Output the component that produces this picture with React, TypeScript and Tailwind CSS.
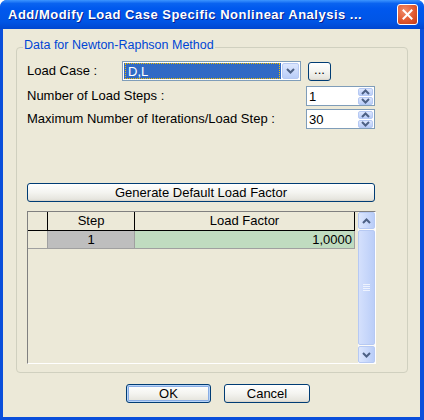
import React from "react";

const ChevDown = ({ className = "" }: { className?: string }) => (
  <svg width="9" height="6" viewBox="0 0 9 6" className={className}>
    <path d="M1 1 L4.5 4.5 L8 1" fill="none" stroke="#4D6185" strokeWidth="2" />
  </svg>
);
const ChevUp = ({ className = "" }: { className?: string }) => (
  <svg width="9" height="6" viewBox="0 0 9 6" className={className}>
    <path d="M1 5 L4.5 1.5 L8 5" fill="none" stroke="#4D6185" strokeWidth="2" />
  </svg>
);

function XpButton({ children, className = "", isDefault = false }: { children: React.ReactNode; className?: string; isDefault?: boolean }) {
  return (
    <div
      className={`flex items-center justify-center rounded-[3px] border border-[#003C74] bg-[linear-gradient(to_bottom,#FFFFFF_0%,#F4F4F0_50%,#E6E5DE_90%,#D6D0C5_100%)] ${
        isDefault ? "shadow-[inset_0_0_0_1px_#B8D4F8,inset_0_0_0_2px_#89ADE4]" : ""
      } ${className}`}
    >
      {children}
    </div>
  );
}

function Spin({ value }: { value: string }) {
  return (
    <div className="flex h-[20px] w-[69px] border border-[#7F9DB9] bg-white">
      <div className="flex flex-1 items-center pl-[2px] text-[13px] leading-none text-black">{value}</div>
      <div className="flex w-[16px] flex-col gap-[1px] py-[1px] pr-[1px]">
        <div className="flex flex-1 items-center justify-center rounded-[2px] border border-[#B6C9F3] bg-[linear-gradient(to_bottom,#DDE7FE,#B9CDF8)]">
          <ChevUp />
        </div>
        <div className="flex flex-1 items-center justify-center rounded-[2px] border border-[#B6C9F3] bg-[linear-gradient(to_bottom,#DDE7FE,#B9CDF8)]">
          <ChevDown />
        </div>
      </div>
    </div>
  );
}

export default function App() {
  return (
    <div
      className="flex h-[420px] w-[424px] flex-col overflow-hidden rounded-t-[7px] bg-[#0A4FDB]"
      style={{ fontFamily: '"Liberation Sans", Arial, sans-serif' }}
    >
      {/* Title bar */}
      <div className="flex h-[29px] shrink-0 items-center bg-[linear-gradient(to_bottom,#3D95FF_0%,#0A63F0_12%,#0058EE_30%,#0055E5_75%,#0047D0_100%)] pl-[8px] pr-[6px]">
        <span className="text-[13px] font-bold leading-none tracking-[0.5px] text-white [text-shadow:1px_1px_0_#0A1E8C]">
          Add/Modify Load Case Specific Nonlinear Analysis ...
        </span>
        <div className="ml-auto flex h-[21px] w-[21px] items-center justify-center rounded-[3px] border border-white bg-[radial-gradient(circle_at_35%_30%,#F08D6C_0%,#E0582F_55%,#C23A14_100%)]">
          <svg width="11" height="11" viewBox="0 0 11 11">
            <path d="M1.5 1.5 L9.5 9.5 M9.5 1.5 L1.5 9.5" stroke="white" strokeWidth="2" strokeLinecap="square" />
          </svg>
        </div>
      </div>

      {/* Client area */}
      <div className="mb-[3px] ml-[3px] mr-[4px] flex flex-1 flex-col bg-[#ECE9D8] pl-[13px] pt-[18px]">
        {/* Group box */}
        <div className="relative h-[326px] w-[392px] rounded-[4px] border border-[#D0D0BF] pl-[10px]">
          <span className="absolute left-[6px] top-[-10px] bg-[#ECE9D8] px-[1px] text-[12.5px] leading-[14px] text-[#0046D5]">
            Data for Newton-Raphson Method
          </span>

          {/* Load case row */}
          <div className="mt-[13px] flex h-[20px] w-[348px] items-center">
            <span className="w-[95px] text-[13px] text-black">Load Case :</span>
            <div className="flex h-[20px] w-[179px] items-stretch border border-[#7F9DB9] bg-white p-[1px]">
              <div className="flex flex-1 items-center bg-[#316AC5] px-[1px]">
                <div className="flex h-full flex-1 items-center border border-dotted border-[#F0C000] pl-[2px] text-[13px] leading-none text-white">
                  D,L
                </div>
              </div>
              <div className="ml-[1px] flex w-[17px] items-center justify-center rounded-[2px] border border-[#B6C9F3] bg-[linear-gradient(to_bottom,#DDE7FE,#B9CDF8)]">
                <ChevDown />
              </div>
            </div>
            <XpButton className="ml-[7px] h-[19px] w-[23px] text-[13px] leading-none text-black">
              <span className="-mt-[3px]">...</span>
            </XpButton>
          </div>

          {/* Number of load steps */}
          <div className="mt-[5px] flex h-[20px] w-[348px] items-center justify-between">
            <span className="text-[13px] text-black">Number of Load Steps :</span>
            <Spin value="1" />
          </div>

          {/* Max iterations */}
          <div className="mt-[3px] flex h-[20px] w-[348px] items-center justify-between">
            <span className="text-[13px] text-black">Maximum Number of Iterations/Load Step :</span>
            <Spin value="30" />
          </div>

          <XpButton className="mt-[54px] h-[19px] w-[348px] text-[13px] leading-none text-black">
            Generate Default Load Factor
          </XpButton>

          {/* Grid */}
          <div className="mt-[9px] flex h-[153px] w-[349px] border-b border-l border-r border-t border-b-white border-l-[#808080] border-r-white border-t-[#808080]">
            <div className="flex w-[327px] flex-col">
              <div className="flex h-[19px] text-[13px] text-black">
                <div className="w-[20px] border-b border-r border-b-black border-r-black bg-[#ECE9D8]" />
                <div className="flex w-[87px] items-center justify-center border-b border-r border-b-black border-r-black bg-[#ECE9D8]">
                  Step
                </div>
                <div className="flex w-[220px] items-center justify-center border-b border-r border-b-black border-r-black bg-[#ECE9D8]">
                  Load Factor
                </div>
              </div>
              <div className="flex h-[18px] text-[13px] text-black">
                <div className="w-[20px] border-b border-r border-b-[#A0A0A0] border-r-[#A0A0A0] bg-[#ECE9D8]" />
                <div className="flex w-[87px] items-center justify-center border-b border-r border-b-[#A0A0A0] border-r-[#A0A0A0] bg-[#BEBEBE]">
                  1
                </div>
                <div className="flex w-[220px] items-center justify-end border-b border-r border-b-[#A0A0A0] border-r-[#A0A0A0] bg-[#C0DCC0] pr-[2px]">
                  1,0000
                </div>
              </div>
            </div>
            {/* Scrollbar */}
            <div className="ml-[3px] flex w-[17px] flex-col bg-[#FBFAF7]">
              <div className="flex h-[17px] items-center justify-center rounded-[2px] border border-[#B6C9F3] bg-[linear-gradient(to_right,#DDE7FE,#B9CDF8)]">
                <ChevUp />
              </div>
              <div className="my-[1px] flex flex-1 items-center justify-center rounded-[2px] border border-[#B6C9F3] bg-[linear-gradient(to_right,#D4E0FC,#BBCEF8)]">
                <div className="flex flex-col gap-[1px]">
                  <div className="h-[1px] w-[7px] bg-[#EEF3FE]" />
                  <div className="h-[1px] w-[7px] bg-[#EEF3FE]" />
                  <div className="h-[1px] w-[7px] bg-[#EEF3FE]" />
                  <div className="h-[1px] w-[7px] bg-[#EEF3FE]" />
                </div>
              </div>
              <div className="flex h-[17px] items-center justify-center rounded-[2px] border border-[#B6C9F3] bg-[linear-gradient(to_right,#DDE7FE,#B9CDF8)]">
                <ChevDown />
              </div>
            </div>
          </div>
        </div>

        {/* OK / Cancel */}
        <div className="mt-[11px] flex gap-[13px] pl-[110px]">
          <XpButton isDefault className="h-[19px] w-[85px] text-[13px] leading-none text-black">
            OK
          </XpButton>
          <XpButton className="h-[19px] w-[86px] text-[13px] leading-none text-black">
            Cancel
          </XpButton>
        </div>
      </div>
    </div>
  );
}
